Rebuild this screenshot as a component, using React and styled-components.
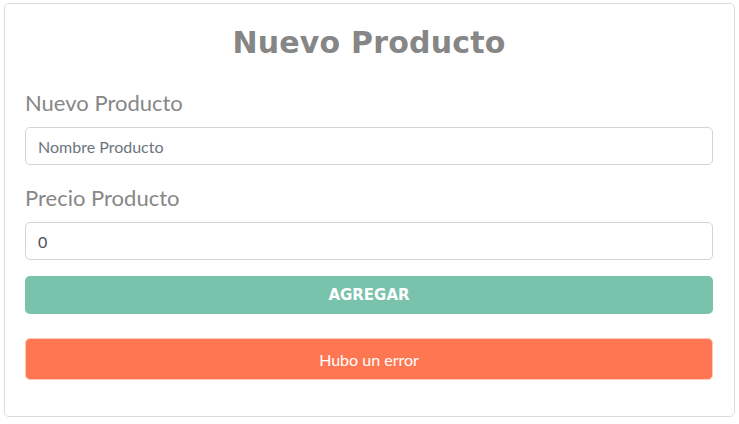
import React from "react";
import styled, { createGlobalStyle } from "styled-components";

const GlobalStyle = createGlobalStyle`
  body {
    margin: 0;
    padding: 3px 4px;
    background: #fff;
    font-family: Lato, "Open Sans", sans-serif;
  }
  * {
    box-sizing: border-box;
  }
`;

const Card = styled.div`
  width: 731px;
  border: 1px solid #dcdcdc;
  border-radius: 5px;
  padding: 20px 21px 36px 20px;
`;

const Title = styled.h2`
  margin: 0 0 25px;
  text-align: center;
  font-family: "DejaVu Sans", sans-serif;
  font-weight: bold;
  font-size: 30px;
  line-height: 38px;
  color: #868686;
  letter-spacing: 0.2px;
`;

const Field = styled.div`
  margin-bottom: 17px;
  &:last-of-type {
    margin-bottom: 16px;
  }
  label {
    display: block;
    padding-top: 3px;
    font-size: 22px;
    line-height: 26px;
    color: #878787;
    margin-bottom: 11px;
  }
`;

const Input = styled.input`
  display: block;
  width: 100%;
  height: 38px;
  padding: 0 12px;
  border: 1px solid #ced4da;
  border-radius: 5px;
  font-family: Lato, "Open Sans", sans-serif;
  font-size: 16px;
  color: #495057;
  outline: none;
  &::placeholder {
    color: #6c757d;
  }
`;

const Button = styled.button`
  display: block;
  width: 100%;
  height: 38px;
  border: none;
  border-radius: 5px;
  background: #79c2ab;
  color: #fff;
  font-family: "DejaVu Sans", sans-serif;
  font-weight: bold;
  font-size: 15px;
  text-transform: uppercase;
  cursor: pointer;
`;

const Alert = styled.div`
  margin-top: 24px;
  height: 42px;
  display: flex;
  align-items: center;
  justify-content: center;
  background: #ff7752;
  border: 1px solid #ffc9b9;
  border-radius: 5px;
  color: #fff;
  font-size: 16px;
`;

const App = () => {
  return (
    <>
      <GlobalStyle />
      <Card>
        <Title>Nuevo Producto</Title>
        <form>
          <Field>
            <label>Nuevo Producto</label>
            <Input type="text" placeholder="Nombre Producto" />
          </Field>
          <Field>
            <label>Precio Producto</label>
            <Input type="number" defaultValue="0" />
          </Field>
          <Button type="submit">Agregar</Button>
        </form>
        <Alert>Hubo un error</Alert>
      </Card>
    </>
  );
};

export default App;
